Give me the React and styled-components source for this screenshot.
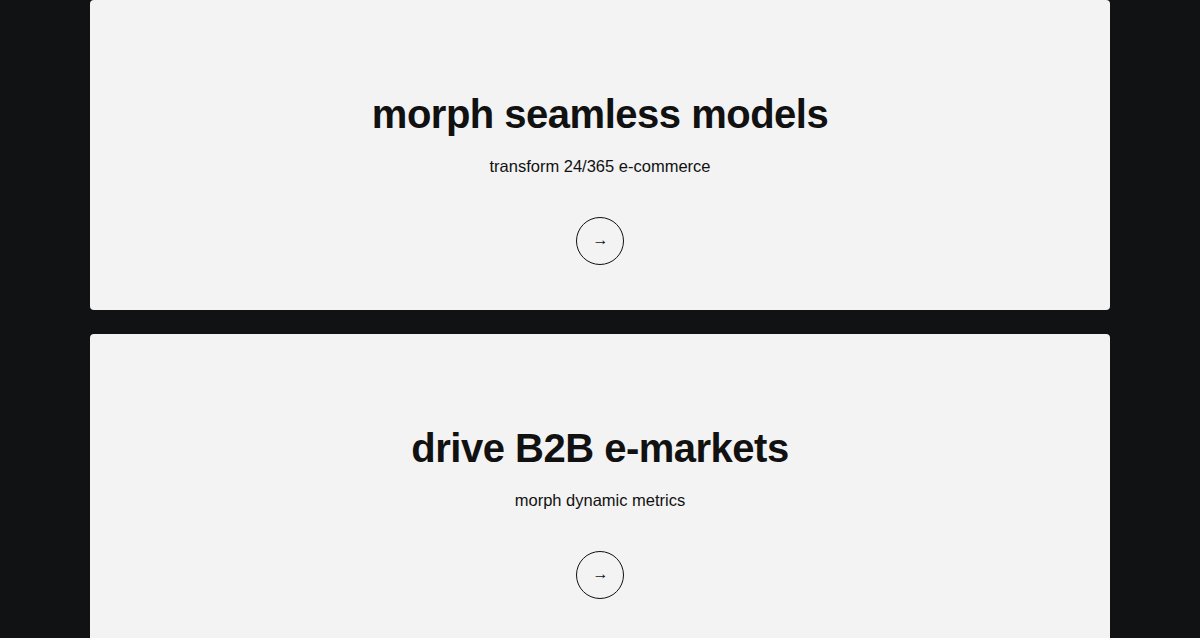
import React from "react";
import styled, { createGlobalStyle } from "styled-components";

const GlobalStyle = createGlobalStyle`
    html, body {
        margin: 0;
        padding: 0;
        background-color: #111214;
        font-family: "Liberation Sans", Arial, sans-serif;
    }
`;

const items = [
    { title: "morph seamless models", text: "transform 24/365 e-commerce" },
    { title: "drive B2B e-markets", text: "morph dynamic metrics" },
];

function App() {
    return (
        <>
            <GlobalStyle />
            <Container>
                {items.map((item) => (
                    <Card key={item.title}>
                        <Title>{item.title}</Title>
                        <Text>{item.text}</Text>
                        <ArrowButton aria-label="next">→</ArrowButton>
                    </Card>
                ))}
            </Container>
        </>
    );
}

export default App;

const Container = styled.div`
    width: 1020px;
    margin: 0 auto;
    display: flex;
    flex-direction: column;
    gap: 24px;
`;
const Card = styled.section`
    background-color: #f3f3f3;
    border-radius: 4px;
    padding: 90px 0 45px;
    display: flex;
    flex-direction: column;
    align-items: center;
    text-align: center;
`;
const Title = styled.h2`
    margin: 0;
    font-size: 40px;
    line-height: 48px;
    font-weight: 700;
    letter-spacing: -0.5px;
    color: #111111;
`;
const Text = styled.p`
    margin: 16px 0 0;
    font-size: 16.5px;
    line-height: 24px;
    color: #111111;
`;
const ArrowButton = styled.button`
    margin-top: 39px;
    width: 48px;
    height: 48px;
    border-radius: 50%;
    border: 1px solid #111111;
    background: transparent;
    color: #111111;
    font-family: "Liberation Sans", Arial, sans-serif;
    font-size: 16px;
    line-height: 1;
    padding: 0 0 3px 1px;
    display: flex;
    align-items: center;
    justify-content: center;
    cursor: pointer;
`;
